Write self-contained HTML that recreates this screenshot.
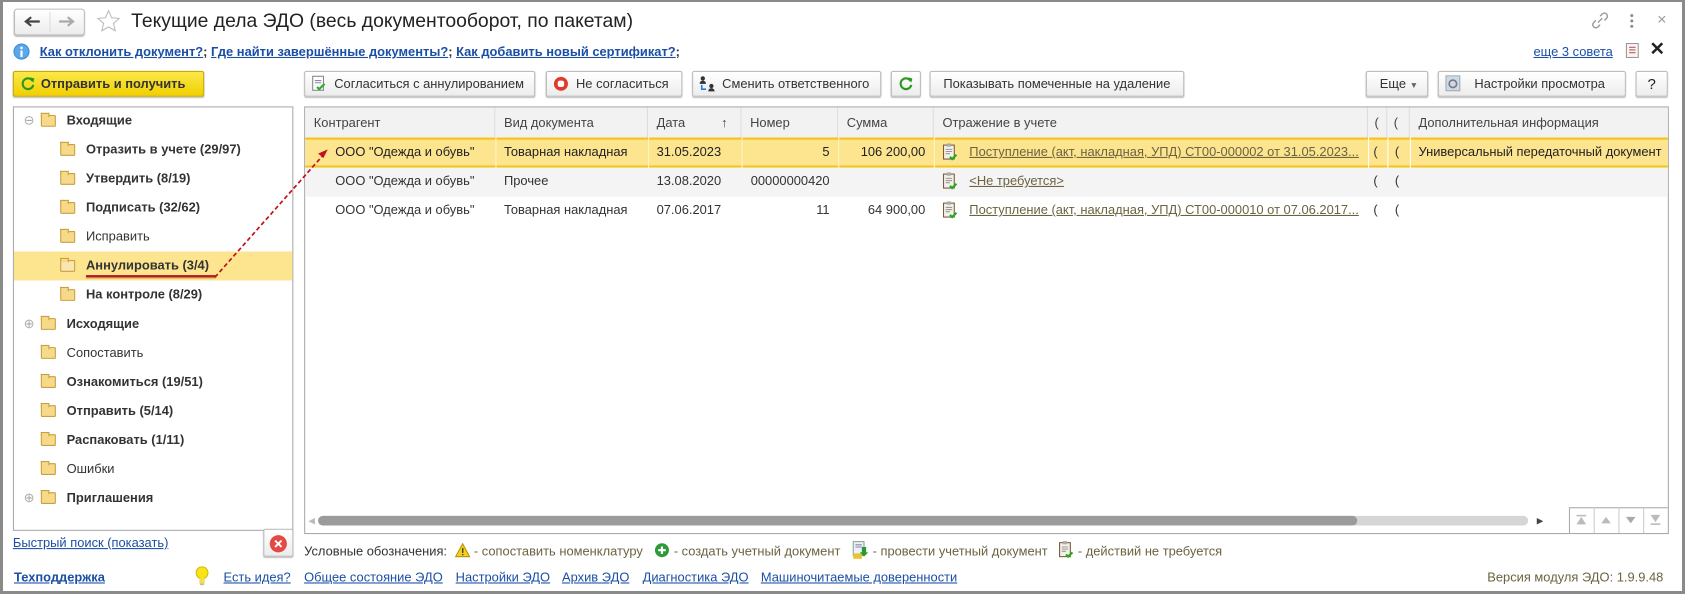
<!DOCTYPE html>
<html><head><meta charset="utf-8"><style>
*{box-sizing:border-box;margin:0;padding:0}
html,body{width:1685px;height:594px;overflow:hidden;background:#fff}
#frame{position:absolute;left:0;top:0;width:1685px;height:594px;border:3px solid #8a8a8a;border-top-width:2px}
#s{position:absolute;left:0;top:0;width:1568px;height:553px;transform:scale(1.07462);transform-origin:0 0;font-family:"Liberation Sans",Arial,sans-serif;font-size:12px;color:#333}
.a{position:absolute;white-space:nowrap}
.btn{position:absolute;height:24px;border:1px solid #bdbdbd;border-radius:2px;background:linear-gradient(#fff,#ececec);box-shadow:0 1px 1px rgba(0,0,0,.25);line-height:22px;font-size:12px;color:#333;white-space:nowrap}
a,.lnk{color:#1b4fa6;text-decoration:underline}
.fold{position:absolute;width:14px;height:11px;background:#f7d98a;border:1px solid #c9a040;border-radius:1px}
.fold:before{content:"";position:absolute;left:-1px;top:-3px;width:6px;height:3px;background:#f7d98a;border:1px solid #c9a040;border-bottom:none}
.ti{position:absolute;height:27px;line-height:27px;white-space:nowrap;font-size:12px;color:#333}
.b{font-weight:bold}
.hd{position:absolute;top:100px;height:28px;line-height:28px;background:#f2f2f2;border-right:1px solid #ddd;padding-left:8px;color:#444}
.cell{position:absolute;height:27px;line-height:27px;padding:0 8px;white-space:nowrap;overflow:hidden}
.lg{color:#6b6340}
</style></head><body>
<div id="frame"></div>
<div id="s">
<div class="btn" style="left:13px;top:8px;width:66px;height:25px;border-radius:3px"></div>
<div class="a" style="left:46px;top:11px;width:1px;height:19px;background:#ddd"></div>
<svg class="a" style="left:21px;top:14px" width="18" height="12"><path d="M16 6H4M8 2L3 6l5 4" stroke="#444" stroke-width="2" fill="none"/></svg>
<svg class="a" style="left:53px;top:14px" width="18" height="12"><path d="M2 6h12M10 2l5 4-5 4" stroke="#aaa" stroke-width="2" fill="none"/></svg>
<svg class="a" style="left:90px;top:9px" width="22" height="22"><path d="M11 1l2.9 6.5 7 .6-5.3 4.6 1.6 6.9L11 16l-6.2 3.6 1.6-6.9L1.1 8.1l7-.6z" fill="none" stroke="#bbb"/></svg>
<div class="a" style="left:122px;top:9px;font-size:18px;color:#222">Текущие дела ЭДО (весь документооборот, по пакетам)</div>
<svg class="a" style="left:1481px;top:11px" width="16" height="16"><path d="M6 10l4-4M8 4l2-2a2.5 2.5 0 0 1 4 4l-2 2M8 12l-2 2a2.5 2.5 0 0 1-4-4l2-2" stroke="#999" stroke-width="1.3" fill="none"/></svg>
<div class="a" style="left:1517px;top:12px;width:3px;height:14px;background:radial-gradient(circle,#888 1.3px,transparent 1.5px) 0 0/3px 5px"></div>
<div class="a" style="left:1542px;top:10px;font-size:15px;color:#999">×</div>
<svg class="a" style="left:12px;top:40px" width="16" height="16"><circle cx="8" cy="8" r="7.5" fill="#3b8ed6"/><circle cx="8" cy="8" r="6.5" fill="#5aa7ea"/><rect x="7" y="7" width="2" height="6" fill="#fff"/><circle cx="8" cy="4.6" r="1.2" fill="#fff"/></svg>
<div class="a b" style="left:37px;top:41px;font-size:12px"><a>Как отклонить документ?</a>; <a>Где найти завершённые документы?</a>; <a>Как добавить новый сертификат?</a>;</div>
<div class="a" style="left:1427px;top:41px"><a>еще 3 совета</a></div>
<svg class="a" style="left:1512px;top:40px" width="14" height="14"><rect x="1.5" y=".5" width="11" height="13" fill="#f6f6f6" stroke="#999"/><path d="M4 4h6M4 6.5h6M4 9h6" stroke="#c55"/></svg>
<div class="a b" style="left:1535px;top:36px;font-size:17px;color:#222">✕</div>
<div class="btn b" style="left:12px;top:66px;width:178px;background:linear-gradient(#fbe84a,#f1cf00);border-color:#c8ab00;padding-left:25px;color:#333">Отправить и получить</div>
<svg class="a" style="left:19px;top:71px" width="14" height="14"><path d="M11.5 4.5A5 5 0 1 0 12 8" stroke="#2a9a1e" stroke-width="2" fill="none"/><path d="M9 1l4 1-1 4z" fill="#2a9a1e"/></svg>
<div class="btn" style="left:283px;top:66px;width:215px;padding-left:27px">Согласиться с аннулированием</div>
<svg class="a" style="left:290px;top:70px" width="14" height="16"><rect x="1" y="1" width="10" height="13" fill="#fff" stroke="#888"/><path d="M3 5h6M3 7h6" stroke="#88a"/><path d="M5 11l2 2 5-5" stroke="#3a3" stroke-width="2" fill="none"/></svg>
<div class="btn" style="left:508px;top:66px;width:127px;padding-left:27px">Не согласиться</div>
<svg class="a" style="left:515px;top:71px" width="14" height="14"><circle cx="7" cy="7" r="6.5" fill="#e03a2a"/><rect x="4" y="4" width="6" height="6" rx="2" fill="#fff"/></svg>
<div class="btn" style="left:644px;top:66px;width:176px;padding-left:27px">Сменить ответственного</div>
<svg class="a" style="left:650px;top:70px" width="16" height="16"><circle cx="4" cy="3" r="2" fill="#333"/><path d="M1 8a3 3 0 0 1 6 0z" fill="#333"/><circle cx="12" cy="10" r="2" fill="#333"/><path d="M9 15a3 3 0 0 1 6 0z" fill="#333"/><path d="M3 9v4h4" stroke="#2a7de0" fill="none" stroke-width="1.5"/></svg>
<div class="btn" style="left:829px;top:66px;width:28px"></div>
<svg class="a" style="left:836px;top:71px" width="14" height="14"><path d="M11.5 4.5A5 5 0 1 0 12 8" stroke="#2a9a1e" stroke-width="2" fill="none"/><path d="M9 1l4 1-1 4z" fill="#2a9a1e"/></svg>
<div class="btn" style="left:865px;top:66px;width:237px;text-align:center">Показывать помеченные на удаление</div>
<div class="btn" style="left:1271px;top:66px;width:58px;padding-left:12px">Еще <span style="font-size:8px;color:#666">▼</span></div>
<div class="btn" style="left:1338px;top:66px;width:175px;padding-left:33px">Настройки просмотра</div>
<svg class="a" style="left:1345px;top:70px" width="14" height="15"><rect x=".5" y=".5" width="13" height="14" fill="#cfd9e6" stroke="#9aa"/><circle cx="7" cy="8" r="3.5" fill="none" stroke="#778" stroke-width="1.5"/></svg>
<div class="btn" style="left:1522px;top:66px;width:30px;text-align:center;font-size:14px;color:#222">?</div>
<div class="a" style="left:12px;top:99px;width:261px;height:395px;border:1px solid #aaa;background:#fff"></div>
<div class="a" style="left:13px;top:234px;width:259px;height:27px;background:#fde590"></div>
<div class="a" style="left:22px;top:105px;color:#aaa;font-size:12px">⊖</div>
<div class="a" style="left:22px;top:294px;color:#aaa;font-size:12px">⊕</div>
<div class="a" style="left:22px;top:456px;color:#aaa;font-size:12px">⊕</div>
<div class="fold" style="left:38px;top:107px"></div><div class="ti b" style="left:62px;top:99px">Входящие</div>
<div class="fold" style="left:56px;top:134px"></div><div class="ti b" style="left:80px;top:126px">Отразить в учете (29/97)</div>
<div class="fold" style="left:56px;top:161px"></div><div class="ti b" style="left:80px;top:153px">Утвердить (8/19)</div>
<div class="fold" style="left:56px;top:188px"></div><div class="ti b" style="left:80px;top:180px">Подписать (32/62)</div>
<div class="fold" style="left:56px;top:215px"></div><div class="ti" style="left:80px;top:207px">Исправить</div>
<div class="fold" style="left:56px;top:242px;background:#fbe6b2"></div><div class="ti b" style="left:80px;top:234px">Аннулировать (3/4)</div>
<div class="fold" style="left:56px;top:269px"></div><div class="ti b" style="left:80px;top:261px">На контроле (8/29)</div>
<div class="fold" style="left:38px;top:296px"></div><div class="ti b" style="left:62px;top:288px">Исходящие</div>
<div class="fold" style="left:38px;top:323px"></div><div class="ti" style="left:62px;top:315px">Сопоставить</div>
<div class="fold" style="left:38px;top:350px"></div><div class="ti b" style="left:62px;top:342px">Ознакомиться (19/51)</div>
<div class="fold" style="left:38px;top:377px"></div><div class="ti b" style="left:62px;top:369px">Отправить (5/14)</div>
<div class="fold" style="left:38px;top:404px"></div><div class="ti b" style="left:62px;top:396px">Распаковать (1/11)</div>
<div class="fold" style="left:38px;top:431px"></div><div class="ti" style="left:62px;top:423px">Ошибки</div>
<div class="fold" style="left:38px;top:458px"></div><div class="ti b" style="left:62px;top:450px">Приглашения</div>
<div class="a" style="left:12px;top:498px"><a>Быстрый поиск (показать)</a></div>
<div class="btn" style="left:245px;top:492px;width:28px;height:26px"></div>
<svg class="a" style="left:250px;top:497px" width="18" height="18"><circle cx="9" cy="9" r="8" fill="#e24a42"/><path d="M6 6l6 6M12 6l-6 6" stroke="#fff" stroke-width="1.8"/></svg>
<div class="a" style="left:283px;top:99px;width:1270px;height:398px;border:1px solid #aaa;background:#fff"></div>
<div class="hd" style="left:284px;width:177px">Контрагент</div>
<div class="hd" style="left:461px;width:142px">Вид документа</div>
<div class="hd" style="left:603px;width:87px">Дата<span style="position:absolute;right:12px">↑</span></div>
<div class="hd" style="left:690px;width:90px">Номер</div>
<div class="hd" style="left:780px;width:89px">Сумма</div>
<div class="hd" style="left:869px;width:404px">Отражение в учете</div>
<div class="hd" style="left:1273px;width:18px;padding-left:6px">(</div>
<div class="hd" style="left:1291px;width:21px;padding-left:6px">(</div>
<div class="hd" style="left:1312px;width:240px;border-right:none">Дополнительная информация</div>
<div class="a" style="left:284px;top:128px;width:1268px;height:28px;background:#fde590;border-top:2px solid #f3c51b;border-bottom:2px solid #f3c51b"></div>
<div class="a" style="left:284px;top:156px;width:1268px;height:27px;background:#f4f4f4"></div>
<div class="a" style="left:461px;top:128px;width:1px;height:28px;background:#fff3c4"></div>
<div class="a" style="left:603px;top:128px;width:1px;height:28px;background:#fff3c4"></div>
<div class="a" style="left:690px;top:128px;width:1px;height:28px;background:#fff3c4"></div>
<div class="a" style="left:780px;top:128px;width:1px;height:28px;background:#fff3c4"></div>
<div class="a" style="left:869px;top:128px;width:1px;height:28px;background:#fff3c4"></div>
<div class="a" style="left:1273px;top:128px;width:1px;height:28px;background:#fff"></div>
<div class="a" style="left:1291px;top:128px;width:1px;height:28px;background:#fff"></div>
<div class="a" style="left:1312px;top:128px;width:1px;height:28px;background:#fff"></div>
<div class="cell" style="left:304px;top:128px;color:#222">ООО "Одежда и обувь"</div>
<div class="cell" style="left:461px;top:128px;color:#222">Товарная накладная</div>
<div class="cell" style="left:603px;top:128px;color:#222">31.05.2023</div>
<div class="cell" style="left:690px;top:128px;width:90px;text-align:right;color:#222">5</div>
<div class="cell" style="left:780px;top:128px;width:89px;text-align:right;color:#222">106 200,00</div>
<div class="cell" style="left:894px;top:128px;width:379px;color:#6b6340;text-decoration:underline">Поступление (акт, накладная, УПД) СТ00-000002 от 31.05.2023...</div>
<div class="cell" style="left:1273px;top:128px;padding-left:5px">(</div><div class="cell" style="left:1291px;top:128px;padding-left:7px">(</div>
<div class="cell" style="left:1312px;top:128px;color:#222">Универсальный передаточный документ</div>
<div class="cell" style="left:304px;top:155px">ООО "Одежда и обувь"</div>
<div class="cell" style="left:461px;top:155px">Прочее</div>
<div class="cell" style="left:603px;top:155px">13.08.2020</div>
<div class="cell" style="left:690px;top:155px;width:90px;text-align:right">00000000420</div>
<div class="cell" style="left:894px;top:155px;color:#6b6340;text-decoration:underline">&lt;Не требуется&gt;</div>
<div class="cell" style="left:1273px;top:155px;padding-left:5px">(</div><div class="cell" style="left:1291px;top:155px;padding-left:7px">(</div>
<div class="cell" style="left:304px;top:182px">ООО "Одежда и обувь"</div>
<div class="cell" style="left:461px;top:182px">Товарная накладная</div>
<div class="cell" style="left:603px;top:182px">07.06.2017</div>
<div class="cell" style="left:690px;top:182px;width:90px;text-align:right">11</div>
<div class="cell" style="left:780px;top:182px;width:89px;text-align:right">64 900,00</div>
<div class="cell" style="left:894px;top:182px;width:379px;color:#6b6340;text-decoration:underline">Поступление (акт, накладная, УПД) СТ00-000010 от 07.06.2017...</div>
<div class="cell" style="left:1273px;top:182px;padding-left:5px">(</div><div class="cell" style="left:1291px;top:182px;padding-left:7px">(</div>
<svg class="a" style="left:877px;top:133px" width="14" height="17"><rect x="1" y="2" width="10" height="13" fill="#f4f1e8" stroke="#7a5a3a"/><rect x="4" y="0.5" width="4" height="3" fill="#aaa"/><path d="M3 6h6M3 8h6M3 10h4" stroke="#999"/><path d="M7 13l2 2 4-4" stroke="#2a2" stroke-width="2" fill="none"/></svg>
<svg class="a" style="left:877px;top:160px" width="14" height="17"><rect x="1" y="2" width="10" height="13" fill="#f4f1e8" stroke="#7a5a3a"/><rect x="4" y="0.5" width="4" height="3" fill="#aaa"/><path d="M3 6h6M3 8h6M3 10h4" stroke="#999"/><path d="M7 13l2 2 4-4" stroke="#2a2" stroke-width="2" fill="none"/></svg>
<svg class="a" style="left:877px;top:187px" width="14" height="17"><rect x="1" y="2" width="10" height="13" fill="#f4f1e8" stroke="#7a5a3a"/><rect x="4" y="0.5" width="4" height="3" fill="#aaa"/><path d="M3 6h6M3 8h6M3 10h4" stroke="#999"/><path d="M7 13l2 2 4-4" stroke="#2a2" stroke-width="2" fill="none"/></svg>
<div class="a" style="left:287px;top:480px;color:#bbb;font-size:8px">◀</div>
<div class="a" style="left:296px;top:480px;width:1126px;height:9px;border-radius:5px;background:#d6d6d6"></div>
<div class="a" style="left:296px;top:480px;width:967px;height:9px;border-radius:5px;background:#9b9b9b"></div>
<div class="a" style="left:1430px;top:480px;color:#444;font-size:8px">▶</div>
<div class="a" style="left:1460px;top:472px;width:92px;height:24px;border-top:1px solid #aaa;border-left:1px solid #aaa"></div>
<div class="a" style="left:1483px;top:472px;width:1px;height:24px;background:#ccc"></div>
<div class="a" style="left:1506px;top:472px;width:1px;height:24px;background:#ccc"></div>
<div class="a" style="left:1529px;top:472px;width:1px;height:24px;background:#ccc"></div>
<svg class="a" style="left:1466px;top:479px" width="11" height="10"><rect x="1" y="0" width="9" height="1.5" fill="#bbb"/><path d="M5.5 2L10 9H1z" fill="#bbb"/></svg>
<svg class="a" style="left:1489px;top:480px" width="11" height="8"><path d="M5.5 1L10 7H1z" fill="#bbb"/></svg>
<svg class="a" style="left:1512px;top:480px" width="11" height="8"><path d="M5.5 7L10 1H1z" fill="#aaa"/></svg>
<svg class="a" style="left:1535px;top:479px" width="11" height="10"><path d="M5.5 7L10 0H1z" fill="#bbb"/><rect x="1" y="8" width="9" height="1.5" fill="#bbb"/></svg>
<div class="a" style="left:80px;top:256px;width:121px;height:2px;background:#c0141b;box-shadow:0 1px 1px rgba(0,0,0,.3)"></div>
<svg class="a" style="left:195px;top:132px;overflow:visible" width="115" height="130"><path d="M5 126L106 12" stroke="#c0141b" stroke-width="1.6" stroke-dasharray="4 2.5" fill="none"/><path d="M110 7l-9 4 5 4z" fill="#c0141b"/></svg>
<div class="a" style="left:283px;top:506px;color:#333">Условные обозначения:</div>
<svg class="a" style="left:423px;top:505px" width="15" height="14"><path d="M7.5 1L14 13H1z" fill="#f4cf1c" stroke="#b8930a"/><rect x="7" y="5" width="1.2" height="4.5" fill="#333"/><rect x="7" y="10.5" width="1.2" height="1.2" fill="#333"/></svg>
<div class="a lg" style="left:441px;top:506px">- сопоставить номенклатуру</div>
<svg class="a" style="left:609px;top:505px" width="14" height="14"><circle cx="7" cy="7" r="6.5" fill="#2d9b3a"/><path d="M7 3.5v7M3.5 7h7" stroke="#fff" stroke-width="2"/></svg>
<div class="a lg" style="left:627px;top:506px">- создать учетный документ</div>
<svg class="a" style="left:793px;top:503px" width="16" height="18"><rect x="1" y="1" width="10" height="13" fill="#eef" stroke="#8a8"/><path d="M3 4h6M3 6h6" stroke="#88a"/><rect x="1" y="12" width="8" height="5" fill="#e8c230"/><path d="M9 6v5l-2 0 4 4 4-4h-2V6z" fill="#2a9a2a"/></svg>
<div class="a lg" style="left:812px;top:506px">- провести учетный документ</div>
<svg class="a" style="left:985px;top:503px" width="14" height="17"><rect x="1" y="2" width="10" height="13" fill="#f4f1e8" stroke="#7a5a3a"/><rect x="4" y="0.5" width="4" height="3" fill="#aaa"/><path d="M3 6h6M3 8h6M3 10h4" stroke="#999"/><path d="M7 13l2 2 4-4" stroke="#2a2" stroke-width="2" fill="none"/></svg>
<div class="a lg" style="left:1003px;top:506px">- действий не требуется</div>
<div class="a b" style="left:13px;top:530px"><a>Техподдержка</a></div>
<svg class="a" style="left:182px;top:527px" width="12" height="18"><ellipse cx="6" cy="6" rx="5.5" ry="5.5" fill="#f7e51a" stroke="#d4b800"/><rect x="3.5" y="11" width="5" height="5" fill="#f2e04a"/><rect x="4" y="16" width="4" height="1.5" fill="#bba"/></svg>
<div class="a" style="left:208px;top:530px"><a>Есть идея?</a></div>
<div class="a" style="left:283px;top:530px"><a>Общее состояние ЭДО</a></div>
<div class="a" style="left:424px;top:530px"><a>Настройки ЭДО</a></div>
<div class="a" style="left:523px;top:530px"><a>Архив ЭДО</a></div>
<div class="a" style="left:598px;top:530px"><a>Диагностика ЭДО</a></div>
<div class="a" style="left:708px;top:530px"><a>Машиночитаемые доверенности</a></div>
<div class="a lg" style="left:1384px;top:530px">Версия модуля ЭДО: 1.9.9.48</div>
</div>
</body></html>
